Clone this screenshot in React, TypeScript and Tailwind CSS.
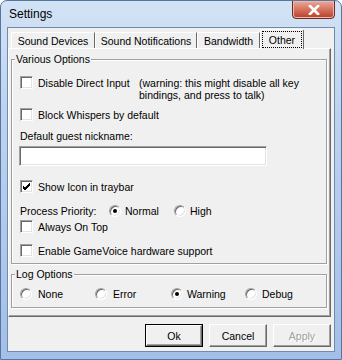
import { ReactNode } from "react";

function Check({ checked = false }: { checked?: boolean }) {
  return (
    <span className="w-[13px] h-[13px] shrink-0 bg-white border border-t-[#a0a0a0] border-l-[#a0a0a0] border-b-white border-r-white shadow-[inset_1px_1px_0_#696969,inset_-1px_-1px_0_#e3e3e3] flex items-center justify-center">
      {checked && (
        <svg width="9" height="9" viewBox="0 0 9 9">
          <path d="M1 4 L3 6 L8 1 M1 5 L3 7 L8 2 M1 6 L3 8 L8 3" stroke="#000" strokeWidth="1" fill="none" />
        </svg>
      )}
    </span>
  );
}

function Radio({ on = false }: { on?: boolean }) {
  return (
    <span className="w-[12px] h-[12px] shrink-0 rounded-full bg-white border border-t-[#a0a0a0] border-l-[#a0a0a0] border-b-white border-r-white shadow-[inset_1px_1px_0_#696969,inset_-1px_-1px_0_#e3e3e3] flex items-center justify-center">
      {on && <span className="w-[4px] h-[4px] rounded-full bg-black" />}
    </span>
  );
}

function GroupBox({ title, className, children }: { title: string; className: string; children: ReactNode }) {
  return (
    <div className={`relative border border-[#a0a0a0] shadow-[inset_1px_1px_0_#fff,1px_1px_0_#fff] ${className}`}>
      <span className="absolute -top-[7px] left-[3px] bg-[#f0f0f0] px-[1px] leading-[12px]">{title}</span>
      {children}
    </div>
  );
}

function Btn({ label, def = false, disabled = false }: { label: string; def?: boolean; disabled?: boolean }) {
  return (
    <div className={`w-[58px] h-[23px] ${def ? "border border-black" : ""}`}>
      <div className="w-full h-full bg-[#f0f0f0] border border-t-white border-l-white border-b-[#696969] border-r-[#696969] shadow-[inset_-1px_-1px_0_#a0a0a0] flex items-center justify-center">
        <span className={disabled ? "text-[#a0a0a0] [text-shadow:1px_1px_0_#fff]" : ""}>{label}</span>
      </div>
    </div>
  );
}

const tabs = [
  { name: "Sound Devices", w: "w-[84px]" },
  { name: "Sound Notifications", w: "w-[102px]" },
  { name: "Bandwidth", w: "w-[63px]" },
];

export default function App() {
  return (
    <div className="w-[342px] h-[360px] [font-family:'Liberation_Sans',Arial,sans-serif] text-[10.5px] text-black leading-[12px] rounded-t-[7px] border border-[#56769f] bg-[linear-gradient(180deg,#d3e3f6_0%,#bdd3ef_30%,#a3bfe8_100%)] flex flex-col overflow-hidden">
      {/* title bar */}
      <div className="h-[26px] flex items-start justify-between shrink-0">
        <span className="ml-[8px] mt-[6px] text-[12px] leading-[14px]">Settings</span>
        <div className="w-[43px] h-[19px] -mt-[1px] mr-[6px] rounded-b-[4px] border border-[#6b2a22] bg-[linear-gradient(180deg,#e9ab9c_0%,#d6725e_50%,#b73e29_100%)] shadow-[inset_0_0_0_1px_#f0b8ab] flex items-center justify-center">
          <svg width="12" height="10" viewBox="0 0 12 10">
            <path d="M2 1 L10 9 M10 1 L2 9" stroke="#fff" strokeWidth="2.6" strokeLinecap="square" />
          </svg>
        </div>
      </div>

      {/* client */}
      <div className="mx-[6px] mb-[7px] flex-1 bg-[#f0f0f0] border border-[#7089ad] flex flex-col">
        {/* tab strip */}
        <div className="h-[20px] pl-[3px] flex items-end shrink-0">
          {tabs.map((t) => (
            <div
              key={t.name}
              className={`${t.w} h-[16px] border-t border-l border-white rounded-tl-[2px] border-r border-r-[#696969] flex items-center justify-center`}
            >
              {t.name}
            </div>
          ))}
          <div className="relative z-10 w-[44px] h-[20px] -mb-[1px] bg-[#f0f0f0] border-t border-l border-white border-r border-r-[#696969] rounded-t-[2px] flex items-start justify-center pt-[1px] px-[1px]">
            <span className="w-full h-[17px] border border-dotted border-black flex items-center justify-center">Other</span>
          </div>
        </div>

        {/* tab panel */}
        <div className="mr-[3px] h-[269px] border-t border-l border-white border-r border-b border-r-[#696969] border-b-[#696969] shadow-[inset_-1px_-1px_0_#a0a0a0] flex flex-col pl-[2px] pr-[3px] shrink-0">
          <GroupBox title="Various Options" className="mt-[10px] h-[205px] pl-[8px] pt-[16px] flex flex-col">
            <div className="flex items-start h-[26px]">
              <Check />
              <span className="ml-[5px] w-[101px] mt-[1px]">Disable Direct Input</span>
              <span className="mt-[1px]">
                (warning: this might disable all key
                <br />
                bindings, and press to talk)
              </span>
            </div>
            <div className="flex items-center h-[13px] mt-[6px]">
              <Check />
              <span className="ml-[5px]">Block Whispers by default</span>
            </div>
            <div className="h-[13px] mt-[8px] flex items-center">Default guest nickname:</div>
            <div className="mt-[4px] w-[248px] h-[20px] -ml-[1px] bg-white border border-t-[#a0a0a0] border-l-[#a0a0a0] border-b-white border-r-white shadow-[inset_1px_1px_0_#696969,inset_-1px_-1px_0_#e3e3e3]" />
            <div className="flex items-center h-[13px] mt-[14px]">
              <Check checked />
              <span className="ml-[5px]">Show Icon in traybar</span>
            </div>
            <div className="flex items-center h-[13px] mt-[11px]">
              <span className="w-[89px]">Process Priority:</span>
              <Radio on />
              <span className="ml-[4px] w-[49px]">Normal</span>
              <Radio />
              <span className="ml-[4px]">High</span>
            </div>
            <div className="flex items-center h-[13px] mt-[3px]">
              <Check />
              <span className="ml-[5px]">Always On Top</span>
            </div>
            <div className="flex items-center h-[13px] mt-[11px]">
              <Check />
              <span className="ml-[5px]">Enable GameVoice hardware support</span>
            </div>
          </GroupBox>

          <GroupBox title="Log Options" className="mt-[10px] h-[34px] pl-[8px] pt-[12px] flex items-start">
            <div className="flex items-center h-[13px] w-[75px]">
              <Radio />
              <span className="ml-[6px]">None</span>
            </div>
            <div className="flex items-center h-[13px] w-[76px]">
              <Radio />
              <span className="ml-[6px]">Error</span>
            </div>
            <div className="flex items-center h-[13px] w-[74px]">
              <Radio on />
              <span className="ml-[4px]">Warning</span>
            </div>
            <div className="flex items-center h-[13px]">
              <Radio />
              <span className="ml-[5px]">Debug</span>
            </div>
          </GroupBox>
        </div>

        {/* buttons */}
        <div className="mt-[7px] pr-[3px] flex justify-end gap-[6px]">
          <Btn label="Ok" def />
          <Btn label="Cancel" />
          <Btn label="Apply" disabled />
        </div>
      </div>
    </div>
  );
}
